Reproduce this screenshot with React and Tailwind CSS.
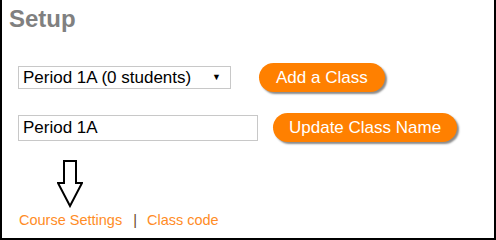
// Setup panel - class select, rename and links
function Arrow() {
    return (
        <svg width="26" height="48" viewBox="0 0 26 48" className="block">
            <polygon
                points="7,1 19,1 19,23 25,23 13,46 1,23 7,23"
                fill="white"
                stroke="black"
                strokeWidth="2"
                strokeLinejoin="miter"
            />
        </svg>
    );
}

function App() {
    return (
        <div className="w-[496px] h-[240px] box-border border-x-2 border-b-2 border-black bg-white font-['Liberation_Sans',Arial,sans-serif] overflow-hidden">
            <h1 className="pl-[7px] pt-[7px] text-[24px] font-bold leading-none text-[#808080]">Setup</h1>

            {/* class picker */}
            <div className="mt-[32px] flex items-center pl-[16px]">
                <div className="w-[213px] h-[23px] border border-[#c8c8c8] flex items-center justify-between pl-[4px] pr-[9px] text-[17px] text-black leading-none">
                    <span>Period 1A (0 students)</span>
                    <span className="text-[9px]">▼</span>
                </div>
                <button className="ml-[28px] h-[29px] px-[17px] rounded-full bg-[#ff8000] text-white text-[17px] leading-none shadow-[2px_2px_2px_#8a8a8a]">
                    Add a Class
                </button>
            </div>

            {/* rename */}
            <div className="mt-[21px] flex items-center pl-[16px]">
                <div className="w-[240px] h-[26px] border border-[#c8c8c8] flex items-center pl-[4px] text-[17px] text-black leading-none">
                    Period 1A
                </div>
                <button className="ml-[15px] h-[29px] px-[16px] rounded-full bg-[#ff8000] text-white text-[17px] leading-none shadow-[2px_2px_2px_#8a8a8a]">
                    Update Class Name
                </button>
            </div>

            <div className="mt-[18px] ml-[55px]">
                <Arrow />
            </div>

            <div className="mt-[4px] pl-[17px] flex items-center text-[14.5px] leading-[17px]">
                <span className="text-[#ff8c26]">Course Settings</span>
                <span className="ml-[11px] mr-[10px] text-[#6a4522]">|</span>
                <span className="text-[#ff8c26]">Class code</span>
            </div>
        </div>
    );
}

export default App;
